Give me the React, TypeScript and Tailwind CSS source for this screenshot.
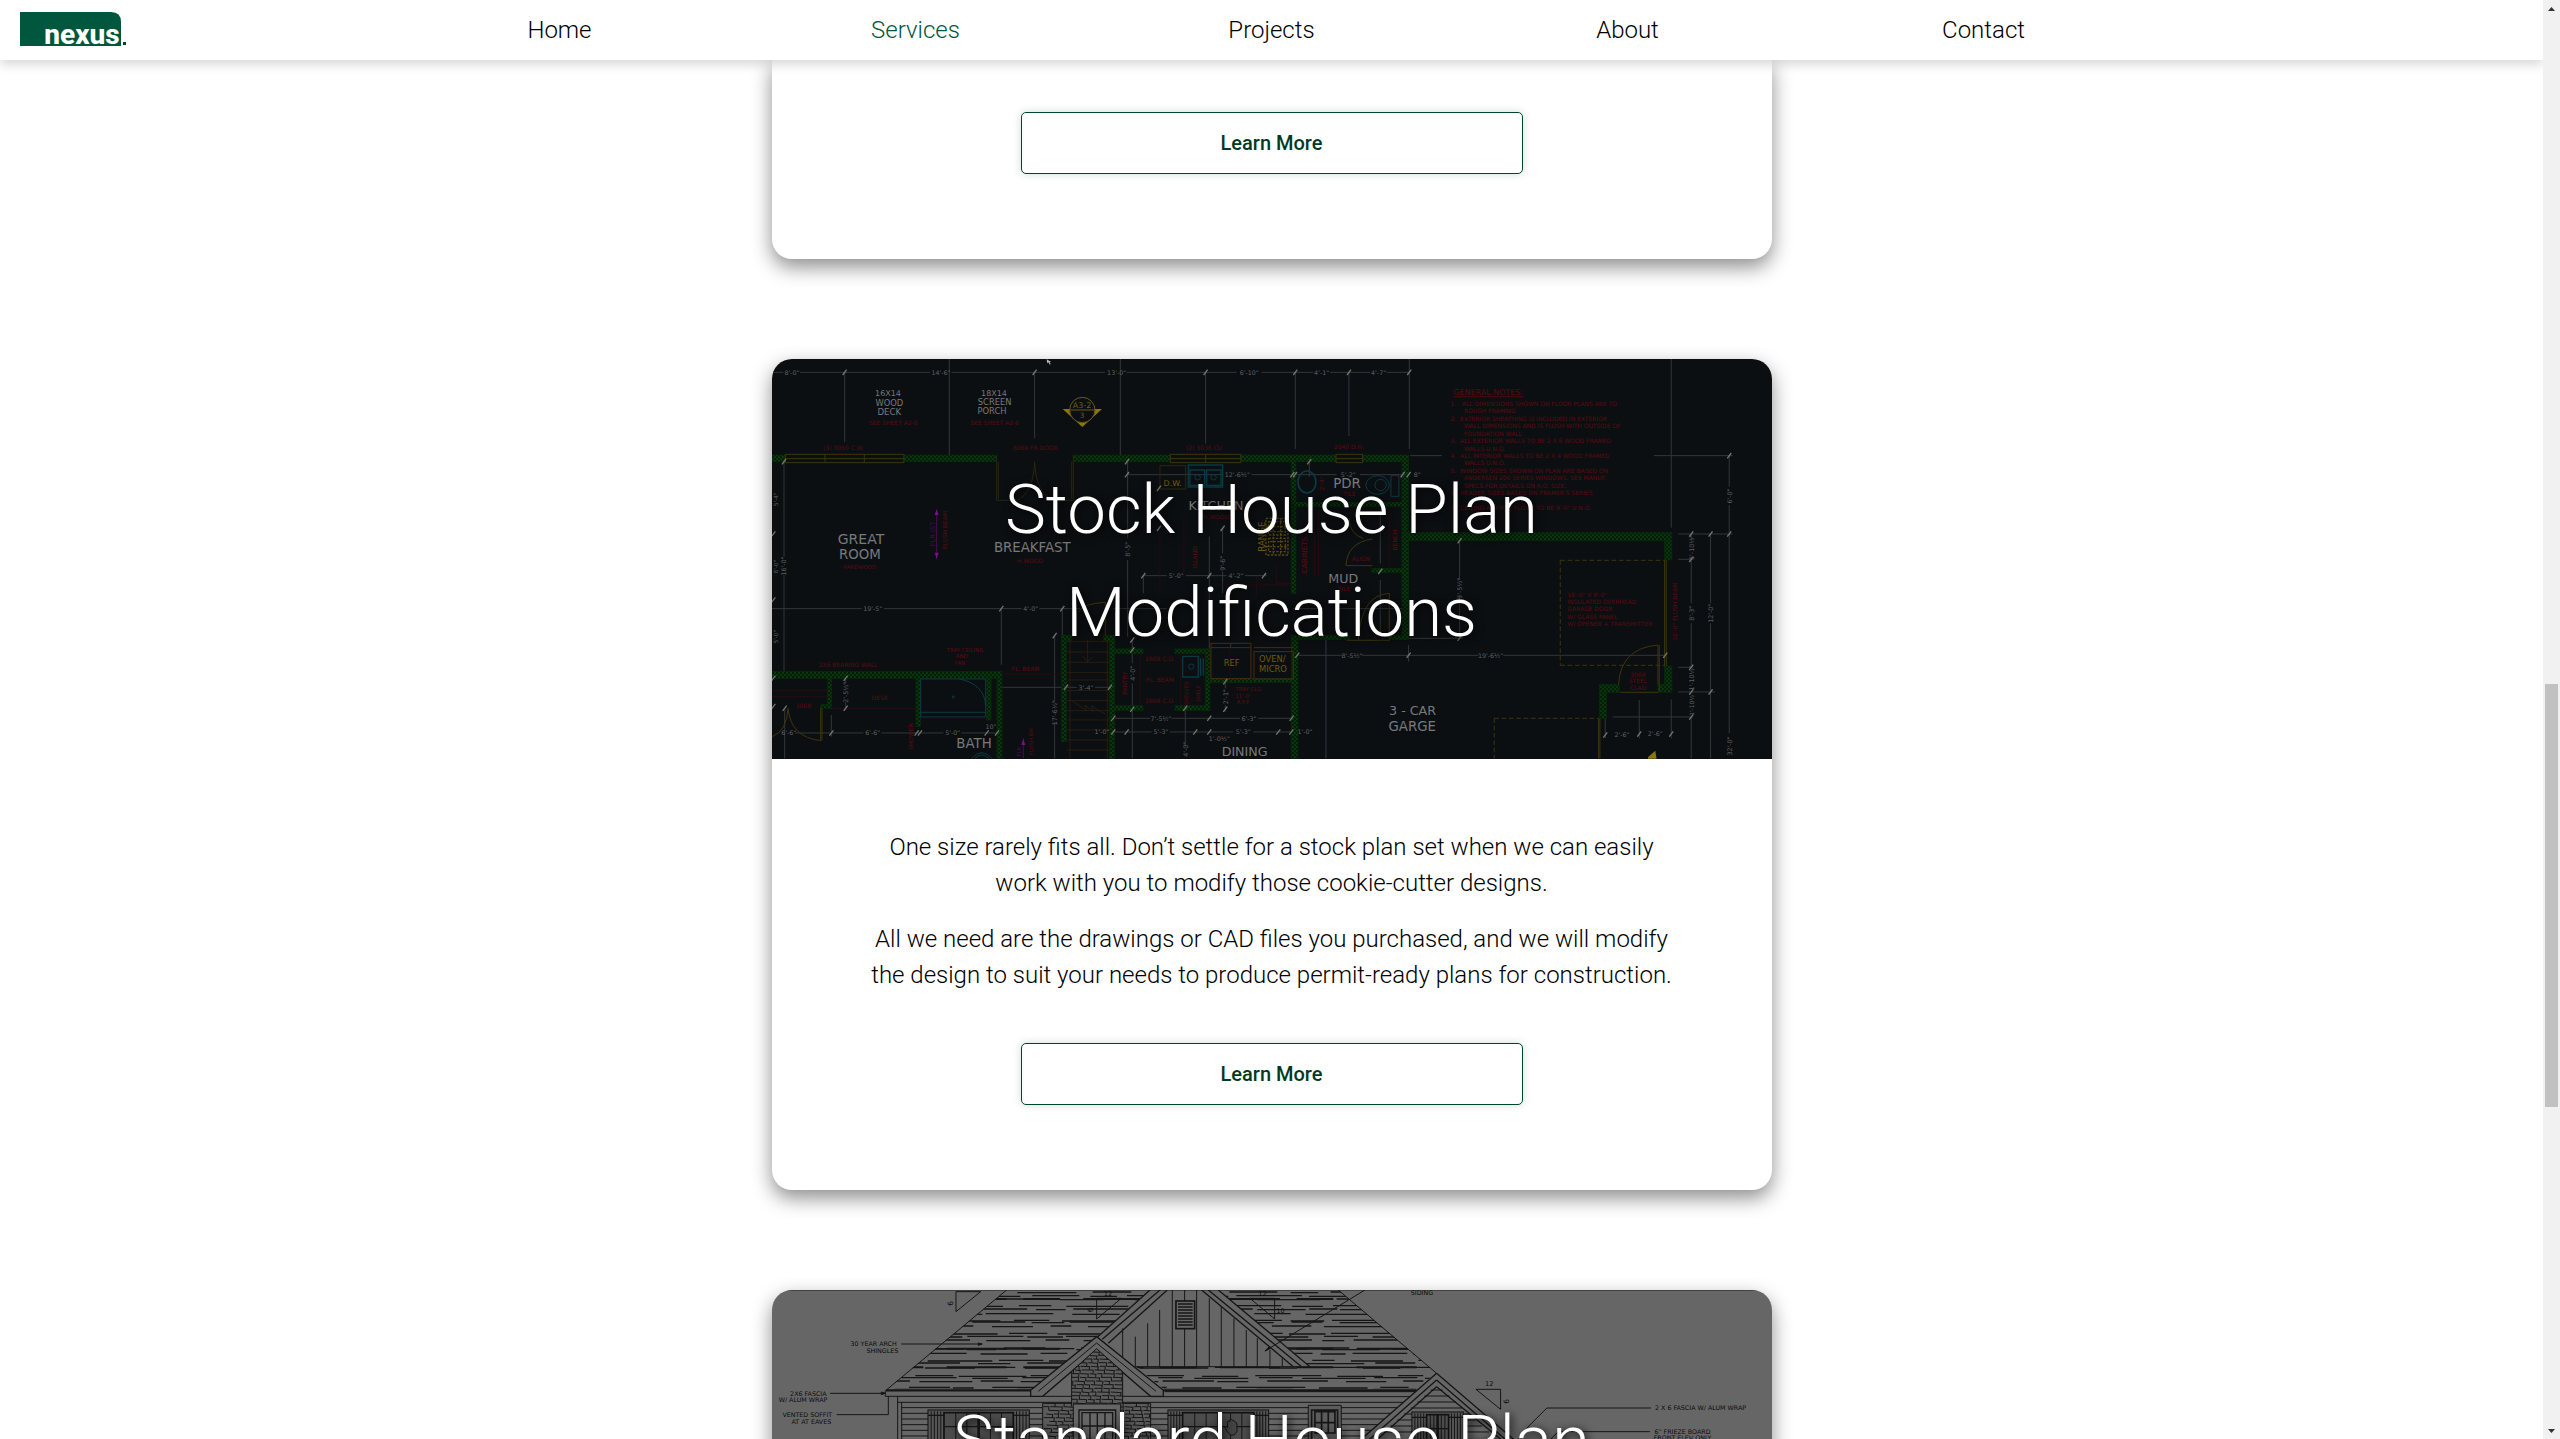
import React from "react";

const NAV = ["Home", "Services", "Projects", "About", "Contact"];

type Line = [number, number, number, number];
type Label = [string, number, number, number, number?];

function Lines({ data }: { data: Line[] }) {
  return (
    <>
      {data.map(([a, b, c, d], i) => (
        <path key={i} d={`M${a} ${b}L${c} ${d}`} />
      ))}
    </>
  );
}

function Labels({ data }: { data: Label[] }) {
  return (
    <>
      {data.map(([t, x, y, size, turn], i) => (
        <text
          key={i}
          x={x}
          y={y}
          fontSize={size}
          textAnchor="middle"
          stroke="none"
          transform={turn ? `rotate(${turn} ${x} ${y})` : undefined}
        >
          {t}
        </text>
      ))}
    </>
  );
}

/* x, y, width, height */
const WALLS: Line[] = [
  [36, 315, 40, 20], [432, 315, 278, 20], [941, 315, 290, 20], [1443, 315, 285, 20], [1808, 315, 138, 20],
  [36, 965, 690, 20], [203, 985, 12, 90], [182, 1063, 33, 12], [468, 985, 14, 145], [680, 985, 13, 125],
  [711, 985, 15, 241], [905, 857, 15, 318], [1048, 857, 16, 369], [905, 857, 30, 15], [1030, 857, 34, 15],
  [1064, 897, 85, 14], [1245, 897, 104, 14], [1336, 897, 14, 185], [1064, 1067, 85, 14], [1245, 1067, 104, 14],
  [1350, 986, 260, 12], [1594, 335, 14, 395], [1594, 865, 20, 361], [1594, 457, 350, 12], [1926, 335, 20, 530],
  [1946, 548, 790, 24], [2714, 572, 22, 58], [2714, 948, 22, 78], [1836, 655, 92, 12], [2518, 1003, 60, 24],
  [2518, 1027, 22, 78], [2694, 1003, 42, 24], [1594, 857, 175, 12], [1890, 857, 56, 12],
];

const DIMS: Line[] = [
  [120, 67, 510, 67], [575, 67, 1035, 67], [1100, 67, 1430, 67], [1505, 67, 1660, 67], [1710, 67, 1830, 67], [1880, 67, 1950, 67],
  [36, 67, 70, 67], [254, 67, 254, 276], [568, 27, 568, 315], [824, 67, 824, 265], [1081, 27, 1081, 315], [1337, 67, 1337, 280],
  [1606, 67, 1606, 297], [1767, 67, 1767, 258], [1948, 27, 1948, 297], [2734, 27, 2734, 533],
  [1950, 317, 2046, 317], [2682, 317, 2918, 317], [2908, 317, 2908, 410], [2908, 465, 2908, 1150],
  [72, 335, 72, 620], [72, 675, 72, 965], [36, 776, 305, 776], [372, 776, 785, 776], [838, 776, 960, 776],
  [724, 776, 724, 945], [907, 776, 907, 857], [1103, 335, 1103, 565], [1103, 630, 1103, 860], [1101, 374, 1390, 374],
  [1475, 374, 1730, 374], [1800, 374, 1935, 374], [1150, 677, 1220, 677], [1278, 677, 1400, 677], [1455, 677, 1520, 677],
  [1150, 677, 1150, 730], [1348, 560, 1348, 900], [1388, 535, 1388, 610], [1388, 665, 1388, 730],
  [884, 857, 884, 1055], [884, 1120, 884, 1226], [726, 1012, 950, 1012], [1005, 1012, 1055, 1012],
  [74, 1075, 74, 1226], [105, 1149, 310, 1149], [365, 1149, 550, 1149], [605, 1149, 715, 1149], [214, 1095, 214, 1160],
  [257, 985, 257, 1000], [257, 1055, 257, 1080], [1117, 870, 1117, 940], [1117, 1000, 1117, 1226],
  [1060, 1105, 1170, 1105], [1235, 1105, 1440, 1105], [1495, 1105, 1600, 1105], [1060, 1146, 1175, 1146], [1230, 1146, 1420, 1146],
  [1480, 1146, 1600, 1146], [1276, 1075, 1276, 1190], [1396, 995, 1396, 1015], [1396, 1065, 1396, 1085],
  [1698, 870, 1698, 1226], [1610, 916, 1745, 916], [1805, 916, 2155, 916], [2230, 916, 2716, 916], [1946, 885, 1946, 935],
  [2099, 570, 2099, 690], [2099, 740, 2099, 865], [1946, 865, 2110, 865], [1861, 480, 1861, 640], [1861, 690, 1861, 850],
  [2755, 552, 2918, 552], [2794, 552, 2794, 570], [2794, 628, 2794, 760], [2794, 820, 2794, 955], [2755, 628, 2800, 628],
  [2755, 952, 2800, 952], [2852, 552, 2852, 760], [2852, 820, 2852, 1226], [2755, 1026, 2865, 1026], [2558, 1101, 2800, 1101],
  [2794, 1101, 2794, 1226], [2638, 1050, 2638, 1165], [2734, 1048, 2734, 1165], [2536, 1105, 2536, 1165], [1600, 776, 1690, 776],
  [1730, 776, 1940, 776], [1060, 776, 1220, 776], [1648, 335, 1648, 380],
];

const TICKS: [number, number][] = [
  [254, 67], [824, 67], [1337, 67], [1606, 67], [1767, 67], [1948, 67], [72, 335], [724, 776], [907, 776], [884, 857],
  [1101, 335], [1101, 374], [1150, 677], [1348, 677], [1512, 677], [918, 1012], [1050, 1012], [257, 985], [257, 1075], [214, 1149],
  [470, 1149], [480, 1149], [680, 1149], [711, 1149], [1117, 870], [1117, 900], [1117, 1078], [1060, 1105], [1348, 1105], [1595, 1105],
  [1060, 1146], [1100, 1146], [1306, 1146], [1348, 1146], [1555, 1146], [1594, 1146], [1276, 1075], [1396, 995], [1396, 1078],
  [1612, 916], [1946, 916], [2716, 916], [2908, 317], [2908, 552], [2852, 552], [2794, 552], [2794, 628], [2794, 952], [2794, 1026],
  [2852, 1026], [2794, 1101], [2536, 1155], [2638, 1152], [2734, 1152], [2099, 572], [2099, 865], [1861, 664], [1597, 374], [1605, 374],
  [1928, 374], [1946, 374], [1648, 335], [1197, 415], [1197, 535], [1388, 535], [40, 552], [40, 750], [40, 985], [40, 1070], [74, 1075],
];

const DIM_TEXT: Label[] = [
  ["8'-0\"", 96, 74, 19], ["14'-6\"", 543, 74, 19], ["13'-0\"", 1070, 74, 19], ["6'-10\"", 1468, 74, 19], ["4'-1\"", 1685, 74, 19],
  ["4'-7\"", 1856, 74, 19], ["19'-5\"", 338, 783, 19], ["4'-0\"", 812, 783, 19], ["12'-6½\"", 1432, 381, 19], ["5'-2\"", 1765, 381, 19],
  ["5'-0\"", 1249, 684, 19], ["4'-2\"", 1428, 684, 19], ["3'-4\"", 978, 1019, 19], ["6'-6\"", 86, 1156, 19], ["6'-6\"", 338, 1156, 19],
  ["5'-0\"", 578, 1156, 19], ["10\"", 693, 1138, 19], ["7'-5½\"", 1203, 1112, 19], ["6'-3\"", 1467, 1112, 19], ["5'-3\"", 1203, 1153, 19],
  ["5'-3\"", 1450, 1153, 19], ["1'-0\"", 1026, 1151, 19], ["1'-0½\"", 1378, 1174, 19], ["1'-0\"", 1635, 1151, 19], ["8'-5½\"", 1776, 923, 19],
  ["19'-6½\"", 2192, 923, 19], ["2'-6\"", 2586, 1160, 19], ["2'-6\"", 2686, 1158, 19], ["8\"", 1972, 381, 19],
  ["16'-0\"", 79, 648, 19, -90], ["2'-5½\"", 264, 1027, 19, -90], ["17'-6½\"", 891, 1088, 19, -90], ["4'-0\"", 1124, 970, 19, -90],
  ["8'-5\"", 1110, 598, 19, -90], ["9'-6\"", 1395, 640, 19, -90], ["2'-1\"", 1403, 1040, 19, -90], ["4'-0\"", 1283, 1198, 19, -90],
  ["9'-5½\"", 2106, 715, 19, -90], ["6'-0\"", 2915, 438, 19, -90], ["1'-10½\"", 2801, 592, 19, -90], ["8'-3\"", 2801, 790, 19, -90],
  ["12'-0\"", 2859, 790, 19, -90], ["1'-10½\"", 2801, 984, 19, -90], ["1'-10½\"", 2801, 1062, 18, -90], ["32'-0\"", 2915, 1188, 19, -90],
  ["5'-4\"", 54, 448, 17, -90], ["6'-0\"", 54, 650, 17, -90], ["5'-0\"", 54, 860, 17, -90],
];

const ROOMS: Label[] = [
  ["16X14", 384, 139, 24], ["WOOD", 388, 167, 25], ["DECK", 388, 195, 26], ["18X14", 702, 137, 24], ["SCREEN", 704, 166, 25],
  ["PORCH", 696, 193, 25], ["GREAT", 303, 583, 42], ["ROOM", 300, 627, 40], ["BREAKFAST", 817, 606, 40], ["KITCHEN", 1368, 480, 38],
  ["PDR", 1761, 414, 40], ["MUD", 1750, 700, 38], ["BATH", 642, 1194, 40], ["DINING", 1454, 1217, 38], ["3 - CAR", 1958, 1095, 38],
  ["GARGE", 1957, 1142, 40],
];

const RED_TEXT: Label[] = [
  ["SEE SHEET A2-6", 400, 224, 18], ["SEE SHEET A2-6", 704, 224, 18], ["(3) 3050 C.W.", 250, 299, 18], ["6068 FR DOOR", 826, 300, 18],
  ["(2) 3036 CU", 1332, 300, 18], ["2040 D.H.", 1766, 297, 18], ["HARDWOOD", 298, 657, 16], ["H.WOOD", 810, 638, 18], ["H.WOOD", 1368, 506, 18],
  ["2X6 BEARING WALL", 264, 951, 18], ["TRAY CEILING", 615, 905, 16], ["AND", 605, 925, 16], ["FAN", 600, 945, 16], ["FL. BEAM", 797, 962, 18],
  ["DESK", 359, 1049, 18], ["3068", 130, 1075, 18], ["2868 C.O.", 1200, 933, 18], ["FL. BEAM", 1200, 997, 18], ["2868 C.O.", 1200, 1060, 18],
  ["TRAY CLG", 1465, 1023, 16], ["11'-0\"", 1450, 1043, 16], ["A.F.F.", 1450, 1062, 16], ["TILE", 1768, 438, 18], ["TILE", 1752, 722, 18],
  ["ALIGN", 1803, 634, 18], ["3068", 2634, 980, 18], ["STEEL", 2634, 1000, 18], ["CLAD", 2634, 1020, 18],
  ["FLUSH BEAM", 560, 540, 18, -90], ["ISLAND", 1312, 622, 18, -90], ["CABINETS", 1640, 615, 22, -90], ["BENCH", 1910, 570, 18, -90],
  ["16'-0\" FLUSH BEAM", 2750, 785, 18, -90], ["PANTRY", 1100, 1000, 18, -90], ["SHELVES", 1284, 1030, 16, -90], ["SHELF", 1320, 1030, 16, -90],
  ["SHOWER", 459, 1160, 18, -90], ["FLUSH BM", 819, 1175, 16, -90], ["2'-4\"", 1692, 400, 18, -90],
];

const NOTES: [string, number, number][] = [
  ["1.   ALL DIMENSIONS SHOWN ON FLOOR PLANS ARE TO", 2072, 167],
  ["ROUGH FRAMING", 2112, 190],
  ["2.  EXTERIOR SHEATHING IS INCLUDED IN EXTERIOR", 2072, 212],
  ["WALL DIMENSIONS AND IS FLUSH WITH OUTSIDE OF", 2112, 234],
  ["FOUNDATION WALL", 2112, 257],
  ["3.  ALL EXTERIOR WALLS TO BE 2 X 6 WOOD FRAMED", 2072, 279],
  ["WALLS U.N.O.", 2112, 302],
  ["4.  ALL INTERIOR WALLS TO BE 2 X 4 WOOD FRAMED", 2072, 324],
  ["WALLS U.N.O.", 2112, 346],
  ["5.  WINDOW SIZES SHOWN ON PLAN ARE BASED ON", 2072, 368],
  ["ANDERSEN 200 SERIES WINDOWS. SEE MANUF.", 2112, 391],
  ["SPECS FOR DETAILS ON R.O. SIZE.", 2112, 413],
  ["6.  HEADER SIZES BASED ON FRAMER'S SERIES", 2072, 436],
  ["7.  CEILING AT FIRST FLOOR TO BE 9'-0\" U.N.O.", 2072, 480],
  ["16'-0\" X 8'-0\"", 2422, 740],
  ["INSULATED OVERHEAD", 2422, 762],
  ["GARAGE DOOR", 2422, 784],
  ["W/ GLASS PANEL", 2422, 806],
  ["W/ OPENER + TRANSMITTER", 2422, 829],
];

function FloorPlan() {
  return (
    <svg
      aria-hidden="true"
      className="absolute inset-0 h-full w-full"
      viewBox="0 0 1000 400"
      preserveAspectRatio="xMidYMid slice"
      fontFamily="'DejaVu Sans', sans-serif"
    >
      <defs>
        <pattern id="hatch" width="12" height="12" patternUnits="userSpaceOnUse">
          <rect width="12" height="12" fill="#061a0a" />
          <path d="M0 0h6v6h-6zM6 6h6v6h-6z" fill="#07390c" />
        </pattern>
      </defs>
      <rect width="1000" height="400" fill="#0c0f12" />
      <g transform="translate(-12 -9) scale(.3333)" fill="none" strokeWidth="3">
        <g stroke="#33363a">
          <Lines data={DIMS} />
        </g>
        <g stroke="#350a0f" strokeWidth="2">
          <path d="M36 1022h165M214 1076h255M36 1040h165M726 972h180M1200 560v170M1272 520v160M1490 680v60M1375 705h235M1410 900v80M1640 500v180M1664 480v200M1675 480v200M1888 480v170M1140 905v170M1262 905v170M1550 640v60h55" />
        </g>
        <g fill="url(#hatch)" stroke="#062c0a" strokeWidth="2">
          {WALLS.map(([x, y, w, h], i) => (
            <rect key={i} x={x} y={y} width={w} height={h} />
          ))}
        </g>
        <g stroke="#3d350d">
          <path d="M76 313h356v25h-356zM76 326h356M195 313v25M313 313v25M1231 313h212v25h-212zM1337 313v25M1231 326h212M1728 313h80v25h-80zM1728 326h80" />
          <path d="M710 315v136h60q50-20 54-116q4 96 58 116h58v-136M715 335v112M935 335v112M1200 347h77v70h-77z" stroke="#2a2711" />
          <path d="M182 1075v97q-90-10-98-97M186 1075v97M84 1075q-4 70-48 85M1838 647h-80q4-70 80-80M1810 565q-42-12-42-60M1888 730v140M1888 730q-85 5-93 140M1760 871h130M2580 1027h115M2694 885v118M2698 885v140M2694 885q-112 10-118 118M2714 630v318M2719 630v318M2516 1105v121M2520 1105v121M1036 857v-100q-70 4-80 30" />
          <path d="M2401 631h313M2401 631v315M2401 946h313M2203 1105h313M2203 1105v121" strokeDasharray="14 8" />
          <path d="M1353 880h120v106h-120zM1353 893h120M1482 893h118M1482 905h118v82h-118zM1412 880v12" stroke="#4a2c10" />
          <path d="M920 875h128M920 906h128M920 937h128M920 968h128M920 990h128M920 1022h128M920 1052h128M920 1082h128M920 1110h128M920 1140h128M920 1170h128M920 1200h128M983 870v70M968 920l15 15l15-15M935 1052l45 30l-5-16l25 18l-5-16l40 24M930 870v356M1042 870v356" stroke="#3a210d" strokeWidth="2" />
        </g>
        <g stroke="#0a3a44">
          <path d="M482 987h195v114h-195zM482 1087h195M598 987q75 15 79 80" />
          <path d="M1285 345h103v66h-103zM1290 360h44v46h-44zM1340 360h43v46h-43zM1322 925v52M1330 925v52M1268 919h47v62h-47z" strokeWidth="4" />
          <circle cx="1313" cy="382" r="8" />
          <circle cx="1361" cy="382" r="8" />
          <circle cx="1294" cy="950" r="8" />
          <circle cx="580" cy="1041" r="3" />
          <ellipse cx="1641" cy="396" rx="27" ry="33" strokeWidth="5" />
          <path d="M1893 377h24v62h-24z" />
          <ellipse cx="1853" cy="405" rx="35" ry="28" />
          <circle cx="1862" cy="405" r="17" />
          <path d="M635 1226q30-36 62 0M645 1226q20-22 42 0" />
        </g>
        <g stroke="#594710" strokeDasharray="7 4">
          <path d="M1518 505h66v110h-66zM1526 515h50v40h-50zM1526 565h50v40h-50zM1540 505v110M1562 505v110M1518 530h66M1518 590h66M1530 545h45M1530 575h45" strokeWidth="4" />
        </g>
        <g stroke="#74766f" strokeWidth="4">
          {TICKS.map(([x, y], i) => (
            <path key={i} d={`M${x - 6} ${y + 8}L${x + 6} ${y - 8}`} />
          ))}
        </g>
        <g stroke="#7d6a0c" fill="#8a760c">
          <path d="M908 177h30l29 40l29-40h30l-59 54z" stroke="none" />
          <circle cx="967" cy="180" r="38" fill="#0c0f12" stroke="#6b5b10" />
          <path d="M929 180h76" stroke="#6b5b10" />
          <path d="M2664 1222l22-20l4 24h-26z" stroke="none" />
          <g fill="#6b5b10">
            <Labels
              data={[["A3-2", 966, 174, 24], ["3", 966, 203, 22], ["D.W.", 1238, 409, 24], ["REF", 1415, 947, 25], ["OVEN/", 1537, 935, 25], ["MICRO", 1539, 965, 25], ["RANGE", 1516, 560, 26, -90]]}
            />
          </g>
        </g>
        <path d="M530 480v148M790 1165v60" stroke="#4b0a56" />
        <path d="M524 495l6-18l6 18zM524 608l6 18l6-18zM784 1185l6-18l6 18z" fill="#7c0e8c" />
        <g fill="#4b0a56">
          <Labels data={[["FLR JST", 524, 552, 20, -90], ["FLR", 784, 1205, 16, -90]]} />
        </g>
        <g fill="#5d6063">
          <Labels data={DIM_TEXT} />
        </g>
        <g fill="#77797b">
          <Labels data={ROOMS} />
        </g>
        <g fill="#5c0a10">
          <Labels data={RED_TEXT} />
          <text x="2080" y="136" fontSize="24" textDecoration="underline">GENERAL NOTES:</text>
          {NOTES.map(([t, x, y], i) => (
            <text key={i} x={x} y={y} fontSize="18" xmlSpace="preserve">
              {t}
            </text>
          ))}
        </g>
        <path d="M860 28l2 12l4-3l3 7l3-2l-3-6h5z" fill="#bbb" />
      </g>
    </svg>
  );
}

const ROWS = [66, 77, 87, 107, 117, 131, 151, 156, 168, 190, 199, 210, 234, 237, 250, 271, 279, 292, 317, 323, 333, 352, 358];
const shingles = ROWS.flatMap((y, r) => {
  const out: Line[] = [];
  let x = 360 + ((r * 67) % 110);
  for (let k = 0; x < 2060; k++) {
    const len = 60 + ((r * 53 + k * 89) % 150);
    out.push([x, y + (k % 2 ? 2 : 0), x + len, y + (k % 2 ? 2 : 0)]);
    x += len + 8 + ((r * 31 + k * 47) % 50);
  }
  return out;
});

const stones = Array.from({ length: 24 }).flatMap((_, r) => {
  const out: Line[] = [];
  let x = 845 + ((r * 17) % 25);
  const y = 245 + r * 11;
  for (let k = 0; x < 1175; k++) {
    const len = 14 + ((r * 13 + k * 19) % 24);
    out.push([x, y, x + len, y + ((k + r) % 3)]);
    out.push([x + len, y, x + len - 1, y + 11]);
    x += len + 4;
  }
  return out;
});

function FrontWindow({ x, y, w, shutter }: { x: number; y: number; w: number; shutter: number }) {
  const s = shutter;
  return (
    <g>
      <rect x={x - s} y={y - 4} width={w + 2 * s} height="140" fill="#555" stroke="#111" />
      <rect x={x} y={y + 4} width={w} height="130" fill="#4c4c4c" stroke="#111" strokeWidth="5" />
      {[0.17, 0.33, 0.5, 0.67, 0.83].map((f) => (
        <path key={f} d={`M${x + w * f} ${y + 4}v130`} strokeWidth={f === 0.5 ? 8 : 3} />
      ))}
      <path d={`M${x} ${y + 46}h${w}`} strokeWidth="4" />
      {[-s * 0.8, -s * 0.6, -s * 0.4, -s * 0.2, w + s * 0.2, w + s * 0.4, w + s * 0.6, w + s * 0.8].map((d) => (
        <path key={d} d={`M${x + d} ${y}v130`} />
      ))}
      <path d={`M${x - s} ${y + 12}h${s}M${x + w} ${y + 12}h${s}`} strokeWidth="4" />
    </g>
  );
}

function Elevation() {
  return (
    <svg
      aria-hidden="true"
      className="absolute inset-0 h-full w-full"
      viewBox="0 0 1000 400"
      preserveAspectRatio="xMidYMid slice"
      fontFamily="'DejaVu Sans', sans-serif"
    >
      <defs>
        <clipPath id="roof">
          <path d="M740 60H1170L1010 200L820 358H380ZM1375 60H1735L2030 310L1965 358H1212L1128 290H1650Z" />
        </clipPath>
        <clipPath id="stone">
          <path d="M1010 236L1088 305V400H1172V520H848V400H935V305Z" />
        </clipPath>
      </defs>
      <rect width="1000" height="400" fill="#666" />
      <g transform="translate(-12 -20) scale(.3333)" fill="none" stroke="#161616" strokeWidth="3">
        <path d="M36 61H3036" stroke="#3c3c3c" />
        <g clipPath="url(#roof)">
          <g strokeWidth="4">
            <Lines data={shingles} />
          </g>
          <path d="M380 87h1700M380 292h1700M380 236h1700" strokeDasharray="110 70 180 50" strokeWidth="6" />
        </g>
        <path d="M740 60L378 361M1735 60L2030 310M1815 60L1515 243" />
        <path d="M413 397H1950M425 413H1950M425 430H1950M425 447H1950M425 464H1950M425 481H1950M425 498H1950M1172 380H1965M1215 365H1975" />
        <path d="M378 361H812M1210 361H1970" strokeWidth="7" />
        <path d="M376 361v18H1210M413 379v130M425 397v112" />
        <path d="M1126 200v90M1163 160v130M1199 120v170M1237 60v230M1274 60v33M1274 176v114M1310 60v230M1348 85v205M1384 110v180M1422 145v145M1459 180v110M1492 205v85M1530 240v50M1567 265v25M1126 290H1650M1088 175v90" />
        <rect x="1248" y="93" width="56" height="83" strokeWidth="5" />
        <path d="M1254 102h44M1254 111h44M1254 120h44M1254 129h44M1254 138h44M1254 147h44M1254 156h44M1254 165h44" strokeWidth="4" />
        <path d="M1170 60L1010 203M1200 60L1027 208M1222 60L1045 220M1325 60L1600 290M1345 60L1625 290M1375 60L1650 290" strokeWidth="4" />
        <path d="M812 361L1010 200L1210 361V379H1172L1010 240L848 379H812Z" fill="#666" strokeWidth="4" />
        <path d="M835 364L1010 219L1188 364" />
        <path d="M1010 236L1088 305V400H1172V520H848V400H935V305Z" fill="#5c5c5c" />
        <g clipPath="url(#stone)">
          <Lines data={stones} />
        </g>
        <path d="M940 402h142v110h-142z" fill="#666" />
        <path d="M957 420h110v90h-110zM966 428h92v80h-92zM990 428v80M1012 428v80M1035 428v80M966 468h92" strokeWidth="4" />
        <FrontWindow x={552} y={424} w={208} shutter={48} />
        <FrontWindow x={1268} y={424} w={214} shutter={44} />
        <path d="M1402 485l-8-14q4-6 9 2l-1-18q6-5 8 0v-6q5-4 7 2q6-2 7 4q6 0 7 8v22q-8 16-22 8z" fill="#444" />
        <path d="M1645 406h99v110h-99z" fill="#5c5c5c" />
        <path d="M1655 420h78v90h-78zM1665 425h60v64h-60zM1685 425v64M1705 425v64M1665 458h60" strokeWidth="5" />
        <path d="M2030 310L1790 520H2270Z" fill="#666" stroke="none" />
        <path d="M2030 310L1790 520M2030 310L2275 520M2030 330L1815 520M2030 330L2250 520M2030 350L1850 510M2030 350L2225 510" strokeWidth="4" />
        <path d="M2012 360h36M1993 378h76M1973 396h115M1953 414h154M1932 432h196M1912 450h235M1892 468h275M1872 486h315" />
        <FrontWindow x={2000} y={430} w={66} shutter={44} />
        <path d="M588 65h74L588 125ZM1010 85h74L1010 147ZM1470 85h74V147ZM2148 358h74v60Z" />
        <path d="M424 222h240M210 370h166M230 434h155v-55M2673 414h-312l-60 60M2670 485h-275l-25 25" />
        <path d="M655 219l12 3l-12 4zM364 366l12 4l-12 4zM1515 243l14-14l3 6z" fill="#161616" />
        <g fill="#0c0c0c">
          <Labels
            data={[["30 YEAR ARCH", 341, 229, 19], ["SHINGLES", 367, 250, 19], ["2X6 FASCIA", 145, 377, 19], ["W/ ALUM WRAP", 129, 397, 19], ["VENTED SOFFIT", 142, 441, 19], ["AT AT EAVES", 154, 461, 19], ["SIDING", 1986, 76, 19], ["2 X 6 FASCIA W/ ALUM WRAP", 2822, 421, 19], ["6\" FRIEZE BOARD", 2768, 491, 19], ["FRONT ELEV ONLY", 2768, 511, 19], ["12", 2188, 347, 20], ["6", 2248, 394, 22, -90], ["6", 578, 100, 22, -90], ["6", 1000, 120, 22, -90], ["12", 1044, 77, 20], ["12", 1508, 77, 20], ["10", 1562, 128, 19]]}
          />
        </g>
      </g>
    </svg>
  );
}

function LearnMore() {
  return (
    <button
      type="button"
      className="h-[62px] w-full max-w-[502px] rounded-[5px] border border-[#004532] bg-white text-xl font-medium text-[#003a24] shadow-[0_0_8px_rgba(0,86,63,0.2)]"
    >
      Learn More
    </button>
  );
}

const CARD =
  "w-full max-w-[1000px] shrink-0 overflow-hidden bg-white shadow-[0_8px_20px_rgba(0,0,0,0.45)]";

function Banner({ title, art }: { title: string; art: React.ReactNode }) {
  return (
    <div className="relative flex h-[400px] items-center justify-center">
      {art}
      <h2 className="relative max-w-[700px] pt-1 text-center text-[69px] leading-[103px] font-light text-white [text-shadow:2px_2px_10px_#000]">
        {title}
      </h2>
    </div>
  );
}

export default function App() {
  return (
    <div className="flex h-screen overflow-hidden bg-white font-['Roboto',sans-serif] text-black">
      <div className="flex min-w-0 flex-1 flex-col overflow-hidden">
        <header className="relative z-10 flex h-[60px] shrink-0 items-center justify-center bg-white shadow-[0_5px_10px_rgba(0,0,0,0.15)]">
          <a href="#home" aria-label="Nexus" className="absolute top-3 left-5">
            <svg width="108" height="34" viewBox="0 0 108 34">
              <path d="M0 0H91Q101 0 101 10V34H0Z" fill="#00573d" />
              <text
                x="62"
                y="32"
                textAnchor="middle"
                fontFamily="'Roboto', sans-serif"
                fontWeight="800"
                fontSize="28"
                fill="#fff"
              >
                nexus
              </text>
              <rect x="103" y="30" width="3" height="3" fill="#123c2e" />
            </svg>
          </a>
          <nav className="grid w-[70%] grid-cols-5 text-center text-2xl font-light">
            {NAV.map((n) => (
              <a key={n} href={`#${n.toLowerCase()}`} className={n === "Services" ? "text-[#00563f]" : "text-black"}>
                {n}
              </a>
            ))}
          </nav>
        </header>
        <main className="flex min-h-0 flex-1 flex-col items-center gap-[100px]">
          <section className={`${CARD} flex justify-center rounded-b-[20px] pt-[52px] pb-[85px]`}>
            <LearnMore />
          </section>
          <section className={`${CARD} rounded-[20px]`}>
            <Banner title="Stock House Plan Modifications" art={<FloorPlan />} />
            <div className="flex flex-col items-center px-20 pt-[70px] pb-[85px] text-center text-2xl leading-9 font-light">
              <p className="mb-5 max-w-[810px]">
                One size rarely fits all. Don’t settle for a stock plan set when we can easily work with you to modify
                those cookie-cutter designs.
              </p>
              <p className="mb-[50px] max-w-[810px]">
                All we need are the drawings or CAD files you purchased, and we will modify the design to suit your
                needs to produce permit-ready plans for construction.
              </p>
              <LearnMore />
            </div>
          </section>
          <section className={`${CARD} rounded-[20px]`}>
            <Banner title="Standard House Plan Designs" art={<Elevation />} />
          </section>
        </main>
      </div>
      <div aria-hidden="true" className="flex w-[17px] shrink-0 flex-col items-center bg-[#f1f1f1]">
        <svg width="17" height="17" viewBox="0 0 17 17" className="shrink-0">
          <path d="M5 11h7L8.500 7z" fill="#333" />
        </svg>
        <div className="grow-[667]" />
        <div className="w-[13px] grow-[423] bg-[#c1c1c1]" />
        <div className="grow-[315]" />
        <svg width="17" height="17" viewBox="0 0 17 17" className="shrink-0">
          <path d="M5 7h7L8.500 11z" fill="#333" />
        </svg>
      </div>
    </div>
  );
}
